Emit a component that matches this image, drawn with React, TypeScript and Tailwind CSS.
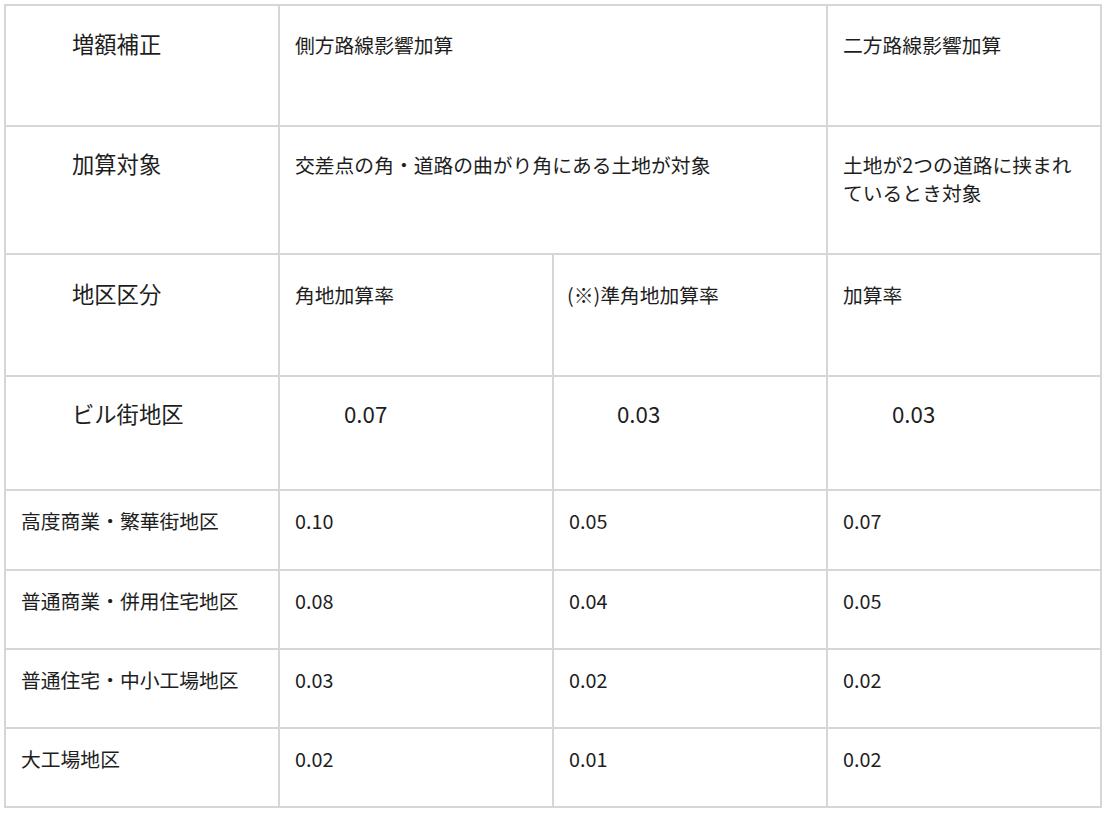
const font = { fontFamily: '"Noto Sans CJK JP", "Noto Sans", sans-serif' }

const cell = 'border-2 border-[#d6d6d6] align-top p-0'

type Row = [string, string, string, string]

const rates: Row[] = [
  ['高度商業・繁華街地区', '0.10', '0.05', '0.07'],
  ['普通商業・併用住宅地区', '0.08', '0.04', '0.05'],
  ['普通住宅・中小工場地区', '0.03', '0.02', '0.02'],
  ['大工場地区', '0.02', '0.01', '0.02'],
]

export default function App() {
  return (
    <div className="min-h-[814px] w-[1110px] bg-white pl-[4px] pt-[4px] text-[#1e1e1e]" style={font}>
      <table className="table-fixed border-collapse border-2 border-[#d6d6d6]">
        <colgroup>
          <col className="w-[274px]" />
          <col className="w-[274px]" />
          <col className="w-[274px]" />
          <col className="w-[274px]" />
        </colgroup>
        <tbody>
          {/* 見出し */}
          <tr className="h-[121px]">
            <td className={cell}>
              <div className="pl-[66px] pt-[21px] text-[22.3px] leading-[32px]">増額補正</div>
            </td>
            <td className={cell} colSpan={2}>
              <div className="pl-[15px] pt-[25px] text-[19.8px] leading-[28px]">側方路線影響加算</div>
            </td>
            <td className={cell}>
              <div className="pl-[15px] pt-[25px] text-[19.8px] leading-[28px]">二方路線影響加算</div>
            </td>
          </tr>
          <tr className="h-[128px]">
            <td className={cell}>
              <div className="pl-[66px] pt-[20px] text-[22.3px] leading-[32px]">加算対象</div>
            </td>
            <td className={cell} colSpan={2}>
              <div className="pl-[15px] pt-[24px] text-[19.8px] leading-[28px]">
                交差点の角・道路の曲がり角にある土地が対象
              </div>
            </td>
            <td className={cell}>
              <div className="px-[15px] pt-[24px] text-[19.8px] leading-[28px]">
                土地が2つの道路に挟まれ
                <br />
                ているとき対象
              </div>
            </td>
          </tr>
          <tr className="h-[122px]">
            <td className={cell}>
              <div className="pl-[66px] pt-[22px] text-[22.3px] leading-[32px]">地区区分</div>
            </td>
            <td className={cell}>
              <div className="pl-[15px] pt-[26px] text-[19.8px] leading-[28px]">角地加算率</div>
            </td>
            <td className={cell}>
              <div className="pl-[13px] pt-[26px] text-[19.8px] leading-[28px]">(※)準角地加算率</div>
            </td>
            <td className={cell}>
              <div className="pl-[15px] pt-[26px] text-[19.8px] leading-[28px]">加算率</div>
            </td>
          </tr>
          <tr className="h-[114px]">
            <td className={cell}>
              <div className="pl-[66px] pt-[20px] text-[22.3px] leading-[32px]">ビル街地区</div>
            </td>
            <td className={cell}>
              <div className="pl-[64px] pt-[20px] text-[22.3px] leading-[32px]">0.07</div>
            </td>
            <td className={cell}>
              <div className="pl-[63px] pt-[20px] text-[22.3px] leading-[32px]">0.03</div>
            </td>
            <td className={cell}>
              <div className="pl-[64px] pt-[20px] text-[22.3px] leading-[32px]">0.03</div>
            </td>
          </tr>

          {/* 地区別の率 */}
          {rates.map((r, i) => (
            <tr key={r[0]} className={i === 0 ? 'h-[80px]' : 'h-[79px]'}>
              {r.map((v, j) => (
                <td key={j} className={cell}>
                  <div className="px-[15px] pt-[16px] text-[19.8px] leading-[28px]">{v}</div>
                </td>
              ))}
            </tr>
          ))}
        </tbody>
      </table>
    </div>
  )
}
